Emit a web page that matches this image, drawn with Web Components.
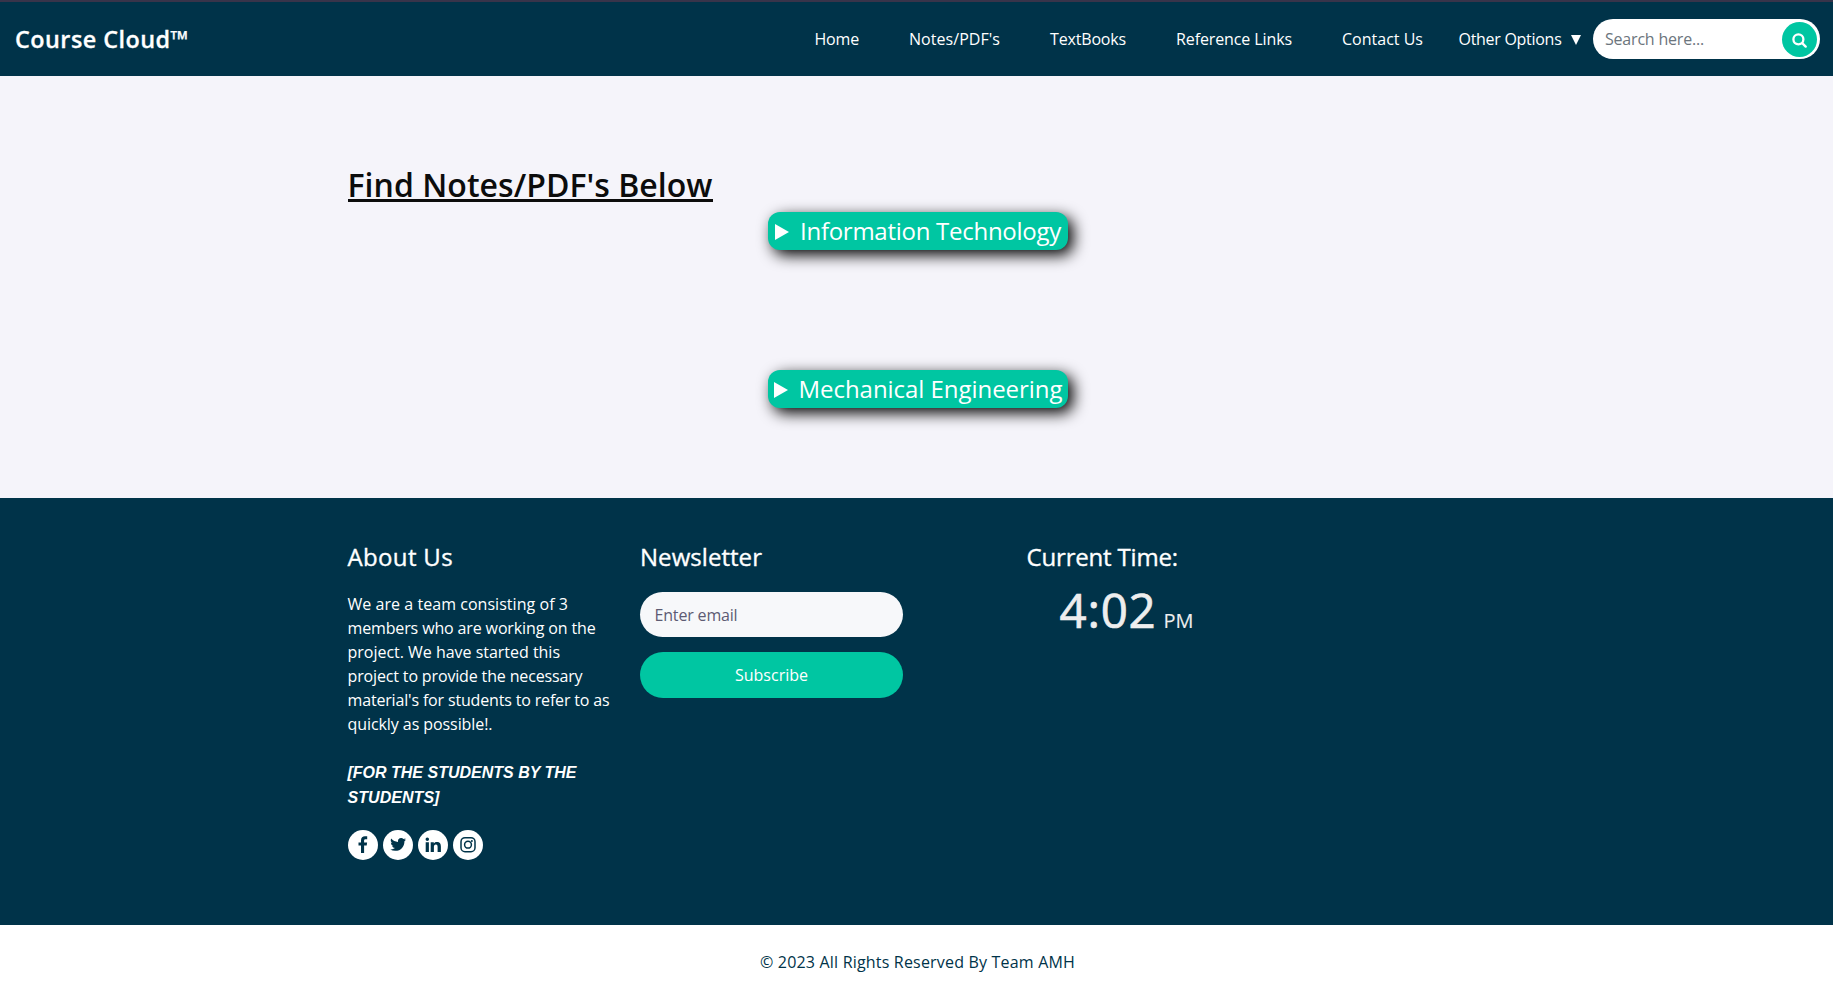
<!DOCTYPE html>
<html lang="en"><head><meta charset="utf-8"><title>Course Cloud</title>
<style>
html,body{margin:0;padding:0}
body{font-family:"Open Sans","Noto Sans",sans-serif;font-size:16px;line-height:24px;background:#fff;color:#fff}
</style></head><body>
<course-page></course-page>
<script>
const define=(name,html,setup)=>customElements.define(name,class extends HTMLElement{
  connectedCallback(){
    if(this.shadowRoot)return;
    const t=document.createElement('template');t.innerHTML=html;
    this.attachShadow({mode:'open'}).append(t.content.cloneNode(true));
    if(setup)setup(this,this.shadowRoot);
  }});

/* A single line of text tracked to fill the width given in "w". */
define('text-run','<style>:host{display:block;white-space:nowrap;width:max-content}span{display:inline-block}</style><span><slot></slot></span>',(el,root)=>{
  const w=parseFloat(el.getAttribute('w')),s=root.querySelector('span');
  const n=el.textContent.length,w0=s.getBoundingClientRect().width;
  if(w&&w0){s.style.letterSpacing=((w-w0)/n)+'px';el.style.width=w+'px'}
});

define('search-box',`<style>
:host{display:flex;box-sizing:border-box;width:227px;height:40px;border-radius:20px;background:#fff;color:#6c757d;align-items:center;justify-content:space-between;padding:0 3px 0 12px}
i{display:flex;width:35px;height:35px;border-radius:50%;background:#00c6a2;align-items:center;justify-content:center}
svg{display:block;margin-top:2px}
</style><text-run w="99">Search here...</text-run><i><svg width="15" height="15" viewBox="0 0 15 15" fill="none" stroke="#fff" stroke-width="2.3" stroke-linecap="round"><circle cx="6.4" cy="6.3" r="5"/><path d="M10.2 10.1L13.7 13.6"/></svg></i>`);

define('site-header',`<style>
:host{display:flex;box-sizing:border-box;height:76px;border-top:2px solid #38344a;background:#003349;align-items:center;padding:0 13px 0 15px;justify-content:space-between}
.brand{font-size:23.4px;font-weight:600;-webkit-text-stroke:.3px #fff}
nav{display:flex;align-items:center}
.gap{margin-right:50px}
.opt{margin-left:35.500px;display:flex;gap:9px;align-items:center}
svg{display:block;margin-top:2px}
search-box{margin-left:12.500px}
</style><text-run class="brand" w="174">Course Cloud™</text-run>
<nav><text-run class="gap" w="44.5">Home</text-run><text-run class="gap" w="91">Notes/PDF's</text-run><text-run class="gap" w="76">TextBooks</text-run><text-run class="gap" w="116">Reference Links</text-run><text-run w="81">Contact Us</text-run><div class="opt"><text-run w="103">Other Options</text-run><svg width="10" height="10"><path d="M0 0H10L5 10Z" fill="#fff"/></svg></div><search-box></search-box></nav>`);

define('branch-toggle',`<style>
:host{display:flex;width:300px;height:38px;border-radius:12px;background:#00c6a2;box-shadow:5px 5px 15px #000;justify-content:center;align-items:center;gap:11px;font-size:24px;line-height:38px}
svg{display:block;margin-top:2px}
</style><svg width="14" height="16"><path d="M0 0L14 8L0 16Z" fill="#fff"/></svg><slot></slot>`);

define('notes-section',`<style>
:host{display:flex;flex-direction:column;box-sizing:border-box;height:422px;background:#f5f4fa;padding-top:90px}
h2{margin:0 0 8px 347.500px;font-size:32px;line-height:38px;height:38px;font-weight:600;color:#0c0c0c;width:365px;background:linear-gradient(#0c0c0c,#0c0c0c) 0 33px/100% 3px no-repeat}
branch-toggle{margin-left:768px}
branch-toggle+branch-toggle{margin-top:120px}
</style><h2><text-run w="365">Find Notes/PDF's Below</text-run></h2>
<branch-toggle><text-run w="261">Information Technology</text-run></branch-toggle>
<branch-toggle><text-run w="264">Mechanical Engineering</text-run></branch-toggle>`);

define('social-icon',`<style>:host{display:flex;width:30px;height:30px;border-radius:50%;background:#fff;align-items:center;justify-content:center}svg{display:block}</style><svg width="18" height="18" viewBox="0 0 18 18"></svg>`,(el,root)=>{
  root.querySelector('svg').innerHTML={
    facebook:'<path fill="#003349" d="M13.200.3v2.900h-1.600c-1.200 0-1.500.6-1.500 1.400v1.900h3l-.4 2.900h-2.600v7.600H7V9.400H4.500V6.500H7V4.300C7 1.700 8.600.2 11 .2c1.100 0 2 .05 2.200.1Z"/>',
    twitter:'<path fill="#003349" transform="translate(1.200 .5) scale(.66)" d="M23.950 4.570a10 10 0 0 1-2.820.770 4.960 4.960 0 0 0 2.160-2.720 9.900 9.900 0 0 1-3.120 1.190 4.920 4.920 0 0 0-8.380 4.480A13.930 13.930 0 0 1 1.640 3.160a4.920 4.920 0 0 0 1.520 6.570 4.900 4.900 0 0 1-2.230-.610v.060a4.920 4.920 0 0 0 3.950 4.830 5 5 0 0 1-2.210.080 4.940 4.940 0 0 0 4.600 3.420A9.870 9.870 0 0 1 0 19.540a13.990 13.990 0 0 0 7.550 2.210c9.140 0 14-7.500 14-13.980v-.64a9.900 9.900 0 0 0 2.400-2.560Z"/>',
    linkedin:'<path fill="#003349" d="M1.700 6.200h3.200V16H1.700ZM3.300 1.400a1.750 1.750 0 1 1 0 3.500 1.750 1.750 0 0 1 0-3.500ZM6.700 6.200h3.100v1.400C10.300 6.700 11.200 6 12.800 6c3.200 0 4.100 2 4.100 4.700V16h-3.300v-4.900c0-1.400-.3-2.500-1.700-2.500-1.500 0-2 1.100-2 2.500V16H6.700Z"/>',
    instagram:'<g fill="none" stroke="#003349" stroke-width="1.500"><rect x="2" y="1.700" width="14" height="14" rx="4"/><circle cx="9" cy="8.700" r="3.400"/></g><circle cx="12.900" cy="4.900" r="1" fill="#003349"/>'
  }[el.getAttribute('name')];
});

define('footer-column',`<style>:host{display:block}h3{margin:0;font-size:24px;line-height:28px;font-weight:500;-webkit-text-stroke:.35px #fff}</style><h3><slot name="title"></slot></h3><slot></slot>`);

define('site-footer',`<style>
:host{display:grid;grid-template-columns:292.500px 386.500px 1fr;box-sizing:border-box;height:427px;background:#003349;padding:45px 0 0 347.500px}
.about{margin-top:21px}
.motto{margin-top:24px;font:italic bold 16px/25px "Liberation Sans",Arial,sans-serif}
.social{display:flex;gap:5px;margin-top:20px}
.pill{display:flex;box-sizing:border-box;width:263px;border-radius:23px;align-items:center}
.email{height:45px;margin-top:21px;background:#f7f8fa;color:#5d5b73;padding-left:14.500px}
.sub{height:46px;margin-top:15px;background:#00c6a2;justify-content:center}
.clock{display:flex;align-items:baseline;gap:7px;margin:11px 0 0 33px;color:#eee;line-height:56px;font-size:47.500px;-webkit-text-stroke:.7px #eee}
.pm{font-size:20px;-webkit-text-stroke:.1px #eee}
</style>
<footer-column><text-run slot="title" w="105.5">About Us</text-run>
<div class="about"><text-run w="220.5">We are a team consisting of 3</text-run><text-run w="248">members who are working on the</text-run><text-run w="212.5">project. We have started this</text-run><text-run w="235">project to provide the necessary</text-run><text-run w="262">material's for students to refer to as</text-run><text-run w="145">quickly as possible!.</text-run></div>
<div class="motto"><text-run w="229">[FOR THE STUDENTS BY THE</text-run><text-run w="92">STUDENTS]</text-run></div>
<div class="social"><social-icon name="facebook"></social-icon><social-icon name="twitter"></social-icon><social-icon name="linkedin"></social-icon><social-icon name="instagram"></social-icon></div></footer-column>
<footer-column><text-run slot="title" w="122">Newsletter</text-run><div class="pill email"><text-run w="83">Enter email</text-run></div><div class="pill sub"><text-run w="73">Subscribe</text-run></div></footer-column>
<footer-column><text-run slot="title" w="151.5">Current Time:</text-run><div class="clock"><text-run w="97">4:02</text-run><text-run class="pm" w="30">PM</text-run></div></footer-column>`);

define('copyright-bar',`<style>:host{display:flex;height:61px;box-sizing:border-box;background:#fff;color:#003349;justify-content:center;align-items:center}
text-run{margin:12px 0 0 2px}</style><text-run w="315">© 2023 All Rights Reserved By Team AMH</text-run>`);

define('course-page',`<style>:host{display:block}</style><site-header></site-header><notes-section></notes-section><site-footer></site-footer><copyright-bar></copyright-bar>`);
</script></body></html>
